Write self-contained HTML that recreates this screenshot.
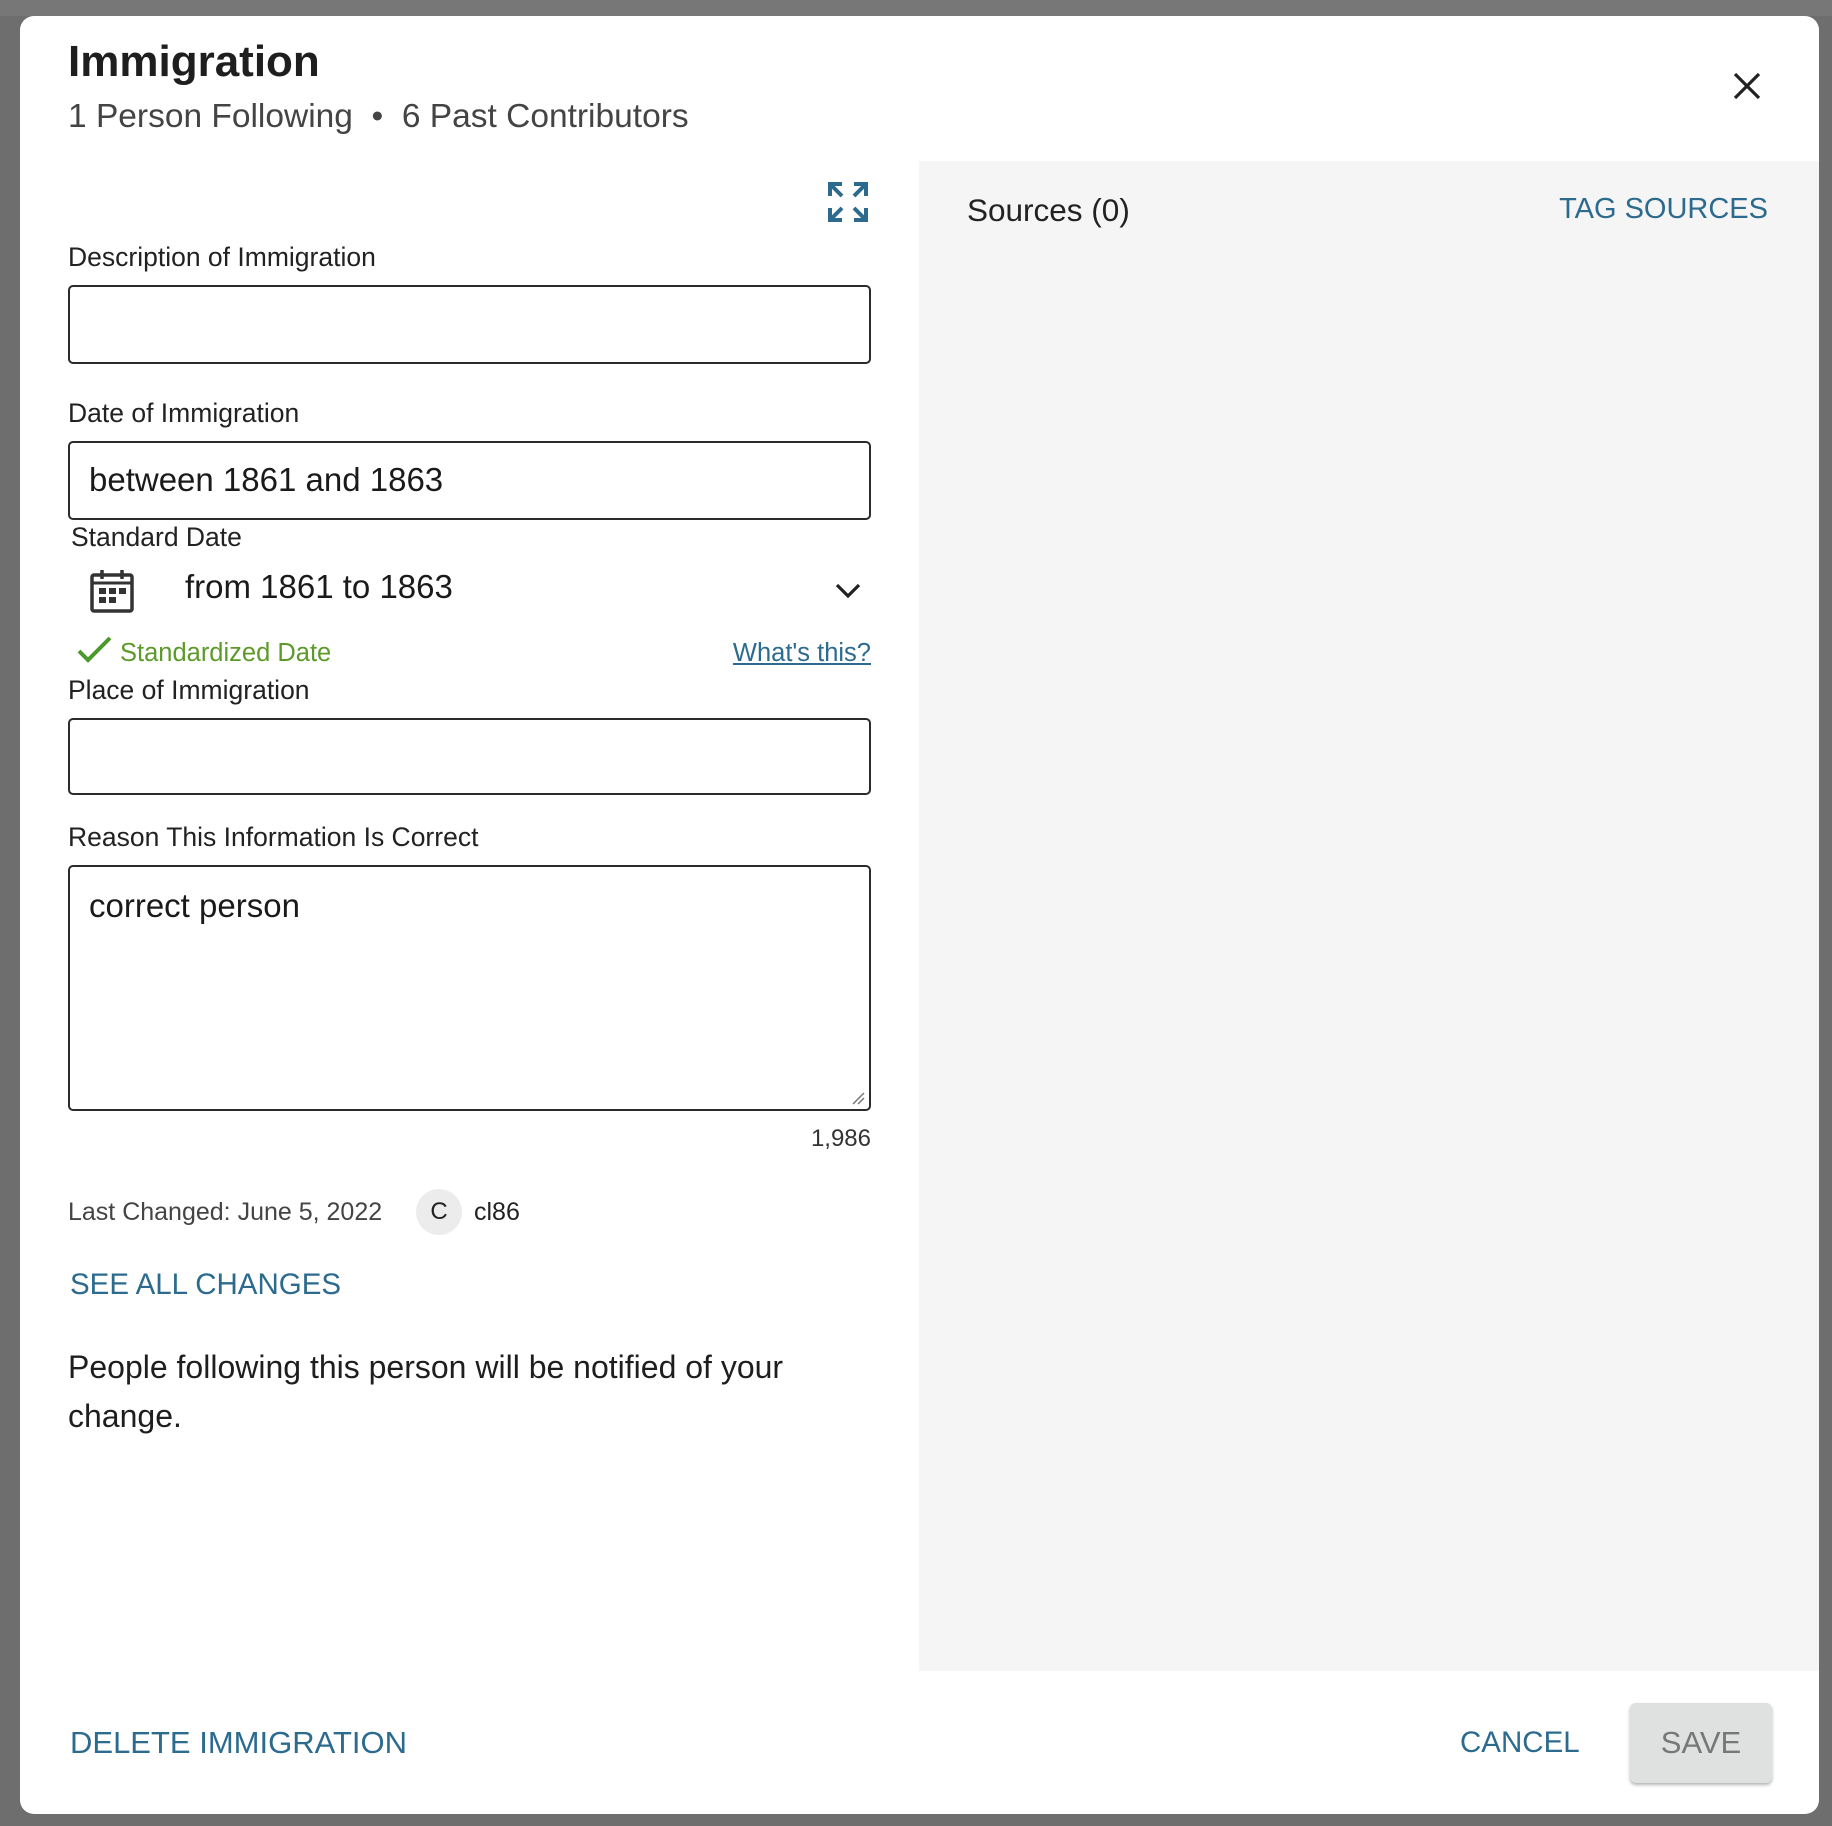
<!DOCTYPE html>
<html><head><meta charset="utf-8"><style>
*{margin:0;padding:0;box-sizing:border-box}
body{width:1832px;height:1826px;background:#6e6e6e;font-family:"Liberation Sans",sans-serif;color:#1a1a1a;position:relative;overflow:hidden}
.a{position:absolute;white-space:nowrap}
.modal{position:absolute;left:20px;top:16px;width:1799px;height:1798px;background:#fff;border-radius:14px}
.lbl{font-size:26.5px;color:#222}
.inp{position:absolute;left:68px;width:803px;border:2px solid #2b2b2b;border-radius:5px;background:#fff}
.blue{color:#2c6b8e}
</style></head><body>
<div class="a" style="left:0;top:0;width:1832px;height:16px;background:#777"></div>
<div class="modal"></div>
<div class="a" style="left:68px;top:37px;font-size:44px;font-weight:bold;color:#1e1e1e">Immigration</div>
<div class="a" style="left:68px;top:98px;font-size:33.5px;color:#444">1 Person Following &nbsp;•&nbsp; 6 Past Contributors</div>
<svg class="a" style="left:1732px;top:71px" width="30" height="30" viewBox="0 0 30 30"><path d="M3 3L27 27M27 3L3 27" stroke="#222" stroke-width="3.2"/></svg>
<div class="a" style="left:919px;top:161px;width:900px;height:1510px;background:#f5f5f5"></div>
<svg class="a" style="left:827px;top:181px" width="42" height="42" viewBox="0 0 42 42" fill="none" stroke="#2c6b8e" stroke-width="4"><path d="M3 15V3H15M3 3L15 15M27 3H39V15M39 3L27 15M3 27V39H15M3 39L15 27M39 27V39H27M39 39L27 27"/></svg>
<div class="a" style="left:967px;top:192px;font-size:31.5px;color:#222">Sources (0)</div>
<div class="a blue" style="right:64px;top:193px;font-size:29px">TAG SOURCES</div>
<div class="a lbl" style="left:68px;top:242px">Description of Immigration</div>
<div class="inp" style="top:285px;height:79px"></div>
<div class="a lbl" style="left:68px;top:398px">Date of Immigration</div>
<div class="inp" style="top:441px;height:79px"></div>
<div class="a" style="left:89px;top:461px;font-size:33px">between 1861 and 1863</div>
<div class="a lbl" style="left:71px;top:522px">Standard Date</div>
<svg class="a" style="left:90px;top:569px" width="44" height="44" viewBox="0 0 44 44"><rect x="2" y="6" width="40" height="36" rx="2" fill="none" stroke="#333" stroke-width="3.5"/><path d="M12 1V10M32 1V10" stroke="#333" stroke-width="3.5"/><path d="M2 14H42" stroke="#333" stroke-width="3"/><g fill="#333"><rect x="9" y="19" width="7" height="6"/><rect x="19" y="19" width="7" height="6"/><rect x="29" y="19" width="7" height="6"/><rect x="9" y="28" width="7" height="6"/><rect x="19" y="28" width="7" height="6"/></g></svg>
<div class="a" style="left:185px;top:568px;font-size:33px">from 1861 to 1863</div>
<svg class="a" style="left:834px;top:582px" width="28" height="18" viewBox="0 0 28 18"><path d="M3 3L14 14L25 3" fill="none" stroke="#222" stroke-width="3.2"/></svg>
<svg class="a" style="left:77px;top:636px" width="36" height="28" viewBox="0 0 36 28"><path d="M2 15L11 24L33 2" fill="none" stroke="#4a9a2e" stroke-width="4"/></svg>
<div class="a" style="left:120px;top:639px;font-size:25.5px;color:#5d9a2a">Standardized Date</div>
<div class="a" style="right:961px;top:639px;font-size:25.5px;color:#2c6b8e;text-decoration:underline">What's this?</div>
<div class="a lbl" style="left:68px;top:675px">Place of Immigration</div>
<div class="inp" style="top:718px;height:77px"></div>
<div class="a lbl" style="left:68px;top:822px">Reason This Information Is Correct</div>
<div class="inp" style="top:865px;height:246px"></div>
<svg class="a" style="left:851px;top:1091px" width="14" height="14"><path d="M2 13L13 2M7 13L13 7" stroke="#777" stroke-width="1.5"/></svg>
<div class="a" style="left:89px;top:887px;font-size:33px">correct person</div>
<div class="a" style="right:961px;top:1125px;font-size:24px;color:#333">1,986</div>
<div class="a" style="left:68px;top:1198px;font-size:25px;color:#444">Last Changed: June 5, 2022</div>
<div class="a" style="left:416px;top:1189px;width:46px;height:46px;border-radius:50%;background:#ececec;font-size:24px;text-align:center;line-height:46px;color:#222">C</div>
<div class="a" style="left:474px;top:1198px;font-size:25px;color:#222">cl86</div>
<div class="a blue" style="left:70px;top:1268px;font-size:29.5px">SEE ALL CHANGES</div>
<div class="a" style="left:68px;top:1343px;font-size:32px;line-height:49px;white-space:normal;width:800px;color:#1e1e1e">People following this person will be notified of your change.</div>
<div class="a blue" style="left:70px;top:1725px;font-size:31px">DELETE IMMIGRATION</div>
<div class="a blue" style="left:1460px;top:1726px;font-size:29.5px">CANCEL</div>
<div class="a" style="left:1630px;top:1703px;width:142px;height:80px;background:#dfe0e0;border-radius:6px;box-shadow:0 2px 3px rgba(0,0,0,.3);font-size:31px;color:#777;text-align:center;line-height:80px">SAVE</div>
</body></html>
